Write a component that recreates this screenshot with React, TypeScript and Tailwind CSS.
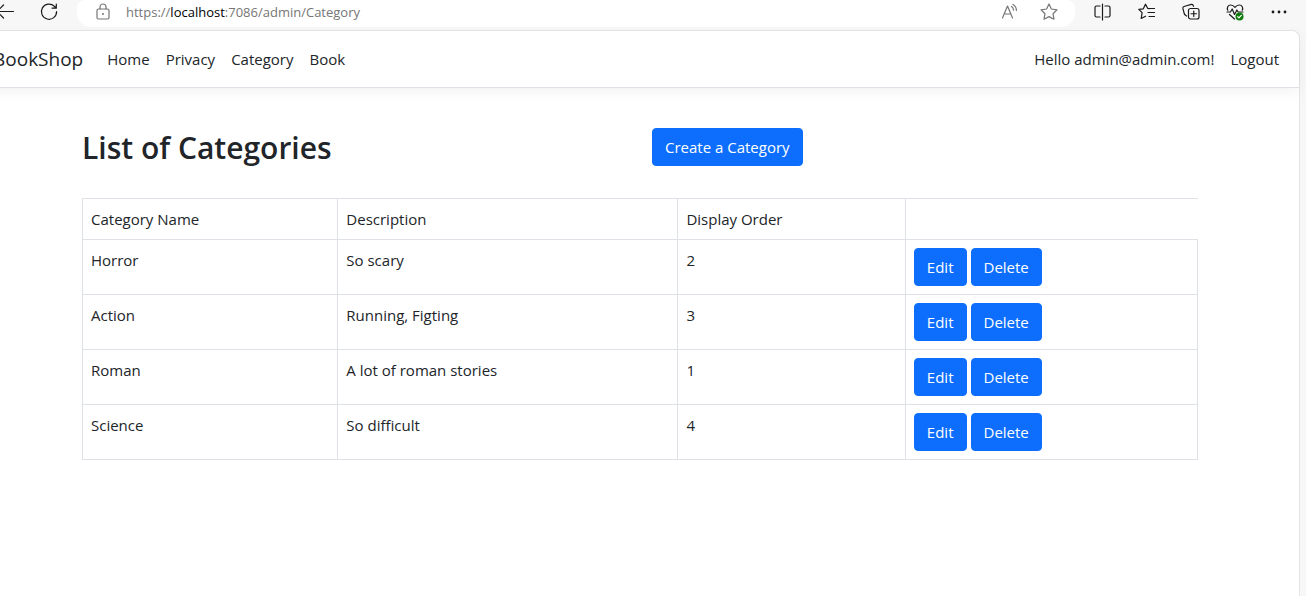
import type { ReactNode } from 'react';

type Category = { name: string; description: string; order: number };

const categories: Category[] = [
  { name: 'Horror', description: 'So scary', order: 2 },
  { name: 'Action', description: 'Running, Figting', order: 3 },
  { name: 'Roman', description: 'A lot of roman stories', order: 1 },
  { name: 'Science', description: 'So difficult', order: 4 },
];

function ToolButton({ label, children }: { label: string; children: ReactNode }) {
  return (
    <button type="button" aria-label={label} className="flex h-6 w-5 shrink-0 items-center justify-center">
      <svg
        viewBox="0 0 20 20"
        className="h-5 w-5"
        fill="none"
        stroke="currentColor"
        strokeWidth="1.2"
        strokeLinecap="round"
        strokeLinejoin="round"
        aria-hidden="true"
      >
        {children}
      </svg>
    </button>
  );
}

function BrowserBar() {
  return (
    <div className="flex h-[30px] items-start text-[#1a1a1a]">
      <div className="flex w-24 shrink-0 gap-6 pl-[14px]">
        <ToolButton label="Back">
          <path d="M18.5 9.5H2M8.5 3 2 9.5 8.5 16" />
        </ToolButton>
        <ToolButton label="Refresh">
          <path d="M17.6 9.5a7.6 7.6 0 1 1-2.2-5.2L17.2 6M17.3 2v4.2h-4.2" />
        </ToolButton>
      </div>
      <div className="flex h-[27px] flex-1 items-start rounded-b-[14px] rounded-t-lg bg-white pl-4 pr-4 text-[#767676]">
        <ToolButton label="Site information">
          <rect x="4" y="7" width="12" height="10" rx="1.5" />
          <path d="M7 7V5a3 3 0 0 1 6 0v2" />
          <circle cx="10" cy="12" r="1" fill="currentColor" stroke="none" />
        </ToolButton>
        <p className="ml-[13px] flex-1 text-[13px] leading-6">
          https://<span className="text-black">localhost</span>:7086/admin/Category
        </p>
        <div className="flex gap-5">
          <ToolButton label="Read aloud">
            <path d="M3.5 16 8.5 4l5 12M5.2 12h6.600M12.500 4.500c1.300.8 2 2.100 2 3.700M14 2.500c2.200 1.200 3.400 3.200 3.400 6" />
          </ToolButton>
          <ToolButton label="Add to favorites">
            <path d="m10 2 2.400 5 5.600.8-4 3.900 1 5.500-5-2.600-5 2.600 1-5.500-4-3.900 5.600-.8z" />
          </ToolButton>
        </div>
      </div>
      <div className="flex shrink-0 gap-6 pl-[18px] pr-[17px]">
        <ToolButton label="Split screen">
          <path d="M9.500 2v16M7 4H3.500Q2 4 2 5.500v8Q2 15 3.500 15H7M12 4h3.500Q17 4 17 5.500v8q0 1.500-1.500 1.500H12" />
        </ToolButton>
        <ToolButton label="Favorites">
          <path d="M12.200 6.700 10.800 6.500 8.500 2.200 6.300 6.800 1.800 7.400l3.300 3.300L4.200 16.500l4.300-2.300M12 6.500h5.500M11 10.500h6.500M12 14.500h5.500" />
        </ToolButton>
        <ToolButton label="Collections">
          <rect x="7.500" y="6.500" width="10.500" height="10.500" rx="2" />
          <path d="M12.750 9v5.500M10 11.750h5.500M5.500 14 4.300 13.100Q3.600 12.600 3.300 11.800L1.900 6.400Q1.600 5 3 4.500L10.300 2.400q1.400-.3 1.900 1l.3.900" />
        </ToolButton>
        <ToolButton label="Browser essentials">
          <path d="M2.800 8.200C1.500 5.800 3 3 5.600 3 7.500 3 9 4 10 5.300 11 4 12.500 3 14.400 3c2.600 0 4.100 2.800 2.800 5.200M2 10h3.500l1.700-3 2.300 5.500 2.400-4.500 1.300 2H18M4.500 12.500 9.500 17" />
          <circle cx="14.500" cy="14.500" r="4" fill="#107c10" stroke="none" />
          <path d="m12.700 14.600 1.200 1.200 2.400-2.500" stroke="white" />
        </ToolButton>
        <ToolButton label="Settings and more">
          <g fill="currentColor" stroke="none">
            <circle cx="4" cy="10" r="1.400" />
            <circle cx="10" cy="10" r="1.400" />
            <circle cx="16" cy="10" r="1.400" />
          </g>
        </ToolButton>
      </div>
    </div>
  );
}

function SiteNav() {
  return (
    <nav className="flex h-[57px] items-center border-b border-[#dee2e6] px-3 leading-6 shadow-[0_4px_12px_rgba(0,0,0,0.05)]">
      <a href="#home" className="mr-4 text-[19px]">BookShop</a>
      <div className="flex flex-1">
        <a href="#home" className="px-2">Home</a>
        <a href="#privacy" className="px-2">Privacy</a>
        <a href="#category" className="px-2">Category</a>
        <a href="#book" className="px-2">Book</a>
      </div>
      <a href="#account" className="px-2">Hello admin@admin.com!</a>
      <button type="button" className="px-2">Logout</button>
    </nav>
  );
}

function ButtonLink({ href, children }: { href: string; children: ReactNode }) {
  return (
    <a href={href} className="inline-block rounded-sm border border-[#0d6efd] bg-[#0d6efd] px-3 py-1.5 leading-6 text-white">
      {children}
    </a>
  );
}

export default function App() {
  return (
    <div className="min-h-screen overflow-hidden bg-[#f7f7f7] font-['Open_Sans',sans-serif] text-[15px] text-[#212529]">
      <div className="-ml-[19px] flex min-h-screen flex-col">
        <BrowserBar />
        <div className="mr-1.5 flex-1 rounded-tr-lg border-r border-t border-[#e5e5e5] bg-white">
          <SiteNav />
          <main className="mx-auto max-w-[1140px] px-3 pt-10">
            <div className="-mx-3 grid grid-cols-2 items-start">
              <h1 className="px-3 text-[30px] font-semibold leading-10">List of Categories</h1>
              <div className="px-3">
                <ButtonLink href="#create">Create a Category</ButtonLink>
              </div>
            </div>
            <table className="mt-[30px] w-full table-fixed border-collapse text-left leading-6">
              <colgroup>
                <col className="w-[22.9%]" />
                <col className="w-[30.5%]" />
                <col className="w-[20.4%]" />
                <col />
              </colgroup>
              <thead>
                <tr className="border-t border-[#dee2e6]">
                  <th className="border border-[#dee2e6] p-2 font-normal">Category Name</th>
                  <th className="border border-[#dee2e6] p-2 font-normal">Description</th>
                  <th className="border border-[#dee2e6] p-2 font-normal">Display Order</th>
                </tr>
              </thead>
              <tbody>
                {categories.map((category) => (
                  <tr key={category.name} className="align-top">
                    <td className="border border-[#dee2e6] p-2">{category.name}</td>
                    <td className="border border-[#dee2e6] p-2">{category.description}</td>
                    <td className="border border-[#dee2e6] p-2">{category.order}</td>
                    <td className="border border-[#dee2e6] p-2">
                      <div className="flex gap-1">
                        <ButtonLink href="#edit">Edit</ButtonLink>
                        <ButtonLink href="#delete">Delete</ButtonLink>
                      </div>
                    </td>
                  </tr>
                ))}
              </tbody>
            </table>
          </main>
        </div>
      </div>
    </div>
  );
}
